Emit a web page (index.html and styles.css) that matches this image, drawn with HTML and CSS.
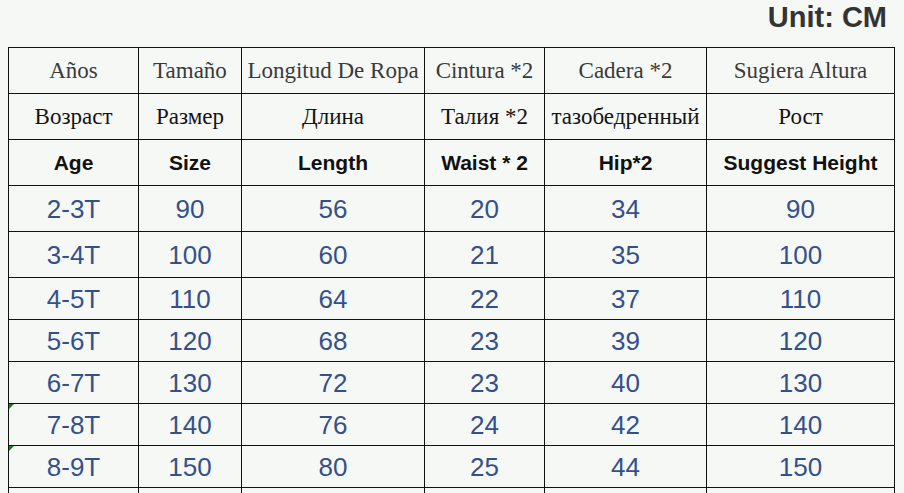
FILE: index.html
```html
<!DOCTYPE html>
<html>
<head>
<meta charset="utf-8">
<link rel="stylesheet" href="styles.css">
</head>
<body>
<div class="unit">Unit: CM</div>
<table class="size">
  <colgroup>
    <col class="c1"><col class="c2"><col class="c3"><col class="c4"><col class="c5"><col class="c6">
  </colgroup>
  <tr class="r46 es">
    <td>Años</td><td>Tamaño</td><td>Longitud De Ropa</td><td>Cintura *2</td><td>Cadera *2</td><td>Sugiera Altura</td>
  </tr>
  <tr class="r46 ru">
    <td>Возраст</td><td>Размер</td><td>Длина</td><td>Талия *2</td><td>тазобедренный</td><td>Рост</td>
  </tr>
  <tr class="r46 en">
    <td>Age</td><td>Size</td><td>Length</td><td>Waist * 2</td><td>Hip*2</td><td>Suggest Height</td>
  </tr>
  <tr class="r46 data">
    <td>2-3T</td><td>90</td><td>56</td><td>20</td><td>34</td><td>90</td>
  </tr>
  <tr class="r46 data">
    <td>3-4T</td><td>100</td><td>60</td><td>21</td><td>35</td><td>100</td>
  </tr>
  <tr class="r42 data">
    <td>4-5T</td><td>110</td><td>64</td><td>22</td><td>37</td><td>110</td>
  </tr>
  <tr class="r42 data">
    <td>5-6T</td><td>120</td><td>68</td><td>23</td><td>39</td><td>120</td>
  </tr>
  <tr class="r42 data">
    <td>6-7T</td><td>130</td><td>72</td><td>23</td><td>40</td><td>130</td>
  </tr>
  <tr class="r42 data">
    <td class="flag">7-8T</td><td>140</td><td>76</td><td>24</td><td>42</td><td>140</td>
  </tr>
  <tr class="r42 data">
    <td class="flag">8-9T</td><td>150</td><td>80</td><td>25</td><td>44</td><td>150</td>
  </tr>
  <tr class="r42 data">
    <td></td><td></td><td></td><td></td><td></td><td></td>
  </tr>
</table>
</body>
</html>
```

FILE: styles.css
```css
html, body {
  margin: 0;
  padding: 0;
  background: #f6f8f5;
  overflow: hidden;
}

.unit {
  height: 47px;
  box-sizing: border-box;
  padding-right: 17px;
  text-align: right;
  font-family: "Liberation Sans", Arial, sans-serif;
  font-weight: bold;
  font-size: 29px;
  line-height: 34px;
  color: #333333;
}

.size {
  margin-left: 8px;
  border-collapse: collapse;
  table-layout: fixed;
  width: 886px;
}

.c1 { width: 130px; }
.c2 { width: 103px; }
.c3 { width: 183px; }
.c4 { width: 120px; }
.c5 { width: 162px; }
.c6 { width: 188px; }

.size td {
  border: 1px solid #111111;
  padding: 0;
  text-align: center;
  vertical-align: middle;
  white-space: nowrap;
  overflow: hidden;
}

.r46 { height: 46px; }
.r42 { height: 42px; }

.es td {
  font-family: "Liberation Serif", "Times New Roman", serif;
  font-size: 23px;
  color: #3a3a3a;
}

.ru td {
  font-family: "Liberation Serif", "Times New Roman", serif;
  font-size: 23px;
  color: #141414;
}

.en td {
  font-family: "Liberation Sans", Arial, sans-serif;
  font-weight: bold;
  font-size: 21px;
  color: #111111;
}

.data td {
  font-family: "Liberation Sans", Arial, sans-serif;
  font-size: 26px;
  color: #34508c;
  padding-top: 2px;
}

.size td.flag {
  position: relative;
}

.size td.flag::before {
  content: "";
  position: absolute;
  left: 0;
  top: 0;
  width: 0;
  height: 0;
  border-top: 5px solid #1e7a1e;
  border-right: 5px solid transparent;
}
```
